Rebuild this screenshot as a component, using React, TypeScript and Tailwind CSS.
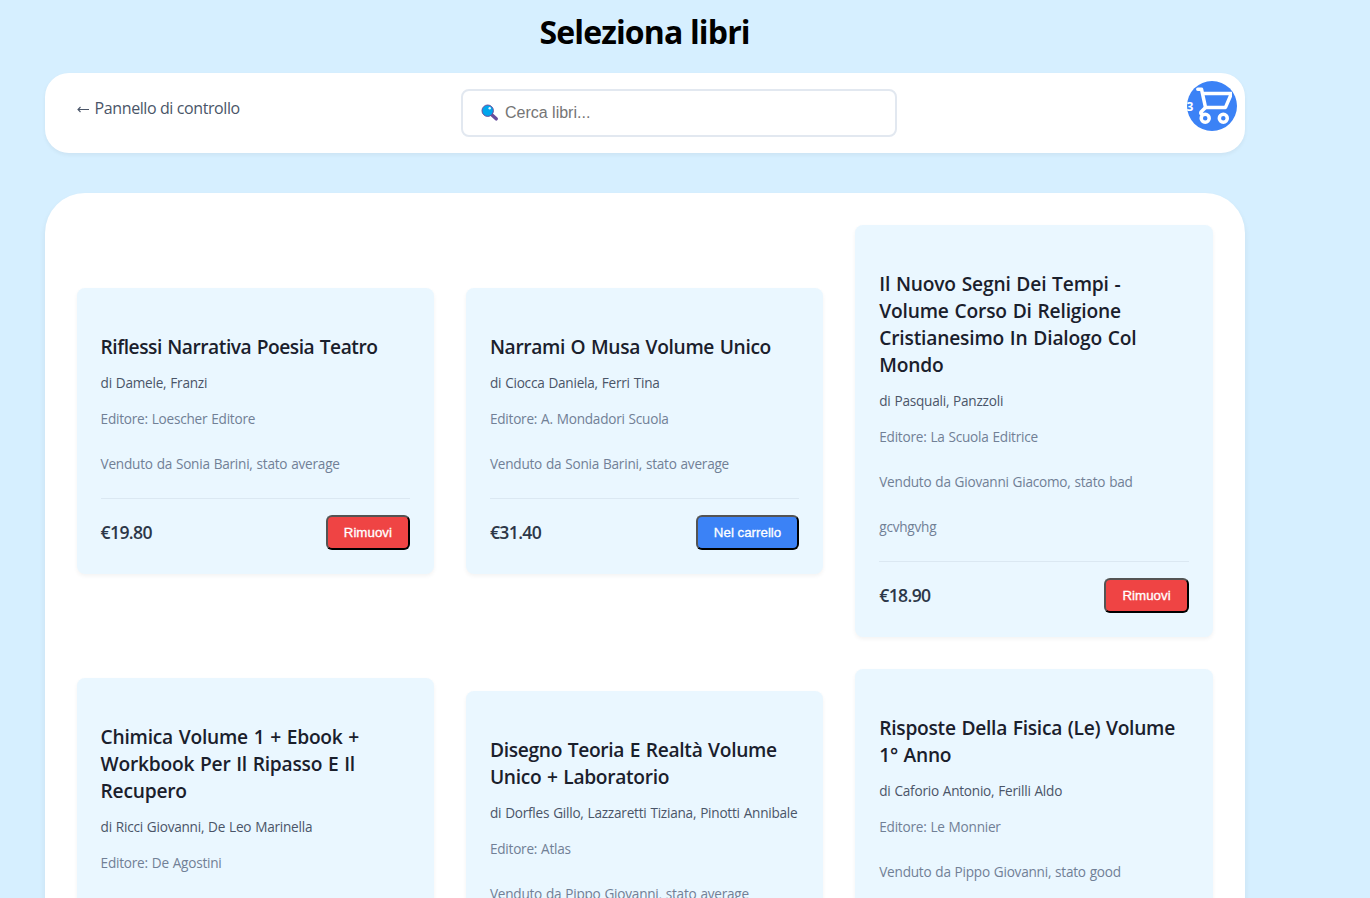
type Book = {
  title: string[];
  tracking: string;
  author: string;
  publisher: string;
  seller: string;
  note?: string;
  price: string;
  inCart: boolean;
};

const books: Book[] = [
  { title: ['Riflessi Narrativa Poesia Teatro'], tracking: 'tracking-[-0.475px]', author: 'Damele, Franzi', publisher: 'Loescher Editore', seller: 'Venduto da Sonia Barini, stato average', price: '€19.80', inCart: true },
  { title: ['Narrami O Musa Volume Unico'], tracking: 'tracking-[-0.350px]', author: 'Ciocca Daniela, Ferri Tina', publisher: 'A. Mondadori Scuola', seller: 'Venduto da Sonia Barini, stato average', price: '€31.40', inCart: false },
  { title: ['Il Nuovo Segni Dei Tempi -', 'Volume Corso Di Religione', 'Cristianesimo In Dialogo Col', 'Mondo'], tracking: 'tracking-[-0.180px]', author: 'Pasquali, Panzzoli', publisher: 'La Scuola Editrice', seller: 'Venduto da Giovanni Giacomo, stato bad', note: 'gcvhgvhg', price: '€18.90', inCart: true },
  { title: ['Chimica Volume 1 + Ebook +', 'Workbook Per Il Ripasso E Il', 'Recupero'], tracking: 'tracking-[-0.230px]', author: 'Ricci Giovanni, De Leo Marinella', publisher: 'De Agostini', seller: 'Venduto da Pippo Giovanni, stato good', price: '€22.50', inCart: false },
  { title: ['Disegno Teoria E Realtà Volume', 'Unico + Laboratorio'], tracking: 'tracking-[-0.320px]', author: 'Dorfles Gillo, Lazzaretti Tiziana, Pinotti Annibale', publisher: 'Atlas', seller: 'Venduto da Pippo Giovanni, stato average', price: '€27.00', inCart: false },
  { title: ['Risposte Della Fisica (Le) Volume', '1° Anno'], tracking: 'tracking-[-0.270px]', author: 'Caforio Antonio, Ferilli Aldo', publisher: 'Le Monnier', seller: 'Venduto da Pippo Giovanni, stato good', note: 'Come nuovo', price: '€24.90', inCart: false },
];

function CartIcon() {
  return (
    <svg viewBox="0 0 40 40" className="-ml-px h-10 w-10 shrink-0" fill="none" stroke="white" strokeWidth="3.500" strokeLinecap="round" strokeLinejoin="round">
      <path d="M5.800 3.200h3.700l4 18.200h20L39.500 7.500H10.500" />
      <path d="M13.500 21.500L9 26q-1 2 1.500 2.200" />
      <circle cx="13.200" cy="32.300" r="4" />
      <circle cx="31.300" cy="32.300" r="4" />
    </svg>
  );
}

function SearchGlyph() {
  return (
    <svg viewBox="0 0 18 18" className="h-[18px] w-[18px]">
      <path d="M11 11L15.200 14.800" stroke="#674e9c" strokeWidth="3.500" strokeLinecap="round" />
      <circle cx="6.700" cy="6.700" r="5.700" fill="#00a6ed" stroke="#674e9c" strokeWidth="1" />
      <circle cx="8.700" cy="4.300" r="1.200" fill="#e1f4ff" />
    </svg>
  );
}

function BookCard({ book }: { book: Book }) {
  return (
    <article className="rounded-lg bg-[#eaf7ff] px-6 pb-6 pt-[45px] text-[13.6px] leading-[22px] tracking-[-0.230px] text-[#718096] shadow-[0_2px_4px_rgba(0,0,0,0.05)] [word-spacing:0.6px]">
      <h3 className={`whitespace-nowrap text-[19.2px] font-semibold leading-[27px] text-[#1a202c] [word-spacing:1px] ${book.tracking}`}>
        {book.title.map((line) => (
          <span key={line} className="block">{line}</span>
        ))}
      </h3>
      <p className="mt-3 whitespace-nowrap text-[#4a5568]">di {book.author}</p>
      <p className="mt-[14px]">Editore: {book.publisher}</p>
      <p className="mt-[23px]">{book.seller}</p>
      {book.note && <p className="mt-[22.8px]">{book.note}</p>}
      <div className="mt-[23px] flex items-center justify-between border-t border-[#dbe8f2] pt-4">
        <span className="pb-px text-[17.6px] font-semibold tracking-[-0.650px] text-[#2d3748]">{book.price}</span>
        <button
          className={`h-[35px] rounded-md border-2 border-black px-4 font-['Liberation_Sans',Arial,sans-serif] text-[13.333px] font-medium leading-[15px] tracking-normal text-white [-webkit-text-stroke:0.3px_white] [border-style:outset] [word-spacing:0] ${book.inCart ? 'bg-[#ef4444]' : 'bg-[#3b82f6]'}`}
        >
          {book.inCart ? 'Rimuovi' : 'Nel carrello'}
        </button>
      </div>
    </article>
  );
}

export default function App() {
  return (
    <div className="h-screen overflow-hidden bg-[#d6efff] pl-[44.6px] font-['Open_Sans','Noto_Sans',sans-serif]">
      <div className="w-[1200px]">
        <h1 className="pt-[10px] text-center text-[32px] font-bold leading-[43px] tracking-[-0.850px] text-black">Seleziona libri</h1>
        <header className="mt-5 flex h-20 items-start rounded-[24px] bg-white pl-8 pr-2 shadow-[0_2px_4px_rgba(0,0,0,0.05)]">
          <a className="mt-[23px] flex w-[384px] gap-[5px] text-[16px] leading-6 tracking-[-0.400px] text-[#4a5568]">
            <svg viewBox="0 0 13 24" className="h-6 w-[13px]" fill="none" stroke="currentColor" strokeWidth="1.100">
              <path d="M12 13.500H1M3.500 11l-2.500 2.500 2.500 2.500" />
            </svg>
            <span>Pannello di controllo</span>
          </a>
          <div className="mt-4 flex h-12 w-[436px] items-center rounded-lg border-2 border-[#e2e8f0] bg-white pl-[18px]">
            <SearchGlyph />
            <input
              placeholder="Cerca libri..."
              className="ml-[6.4px] w-[360px] bg-transparent font-['Liberation_Sans',Arial,sans-serif] text-[16px] outline-none placeholder:text-[#757575]"
            />
          </div>
          <button className="ml-auto mt-2 flex h-[50px] w-[50px] items-center rounded-full bg-[#3b82f6] text-[12px] font-bold text-white">
            <span className="pt-px">3</span>
            <CartIcon />
          </button>
        </header>
        <main className="mt-10 grid grid-cols-3 items-center gap-8 rounded-[40px] bg-white p-8 shadow-[0_4px_6px_rgba(0,0,0,0.07)]">
          {books.map((book) => (
            <BookCard key={book.title[0]} book={book} />
          ))}
        </main>
      </div>
    </div>
  );
}
